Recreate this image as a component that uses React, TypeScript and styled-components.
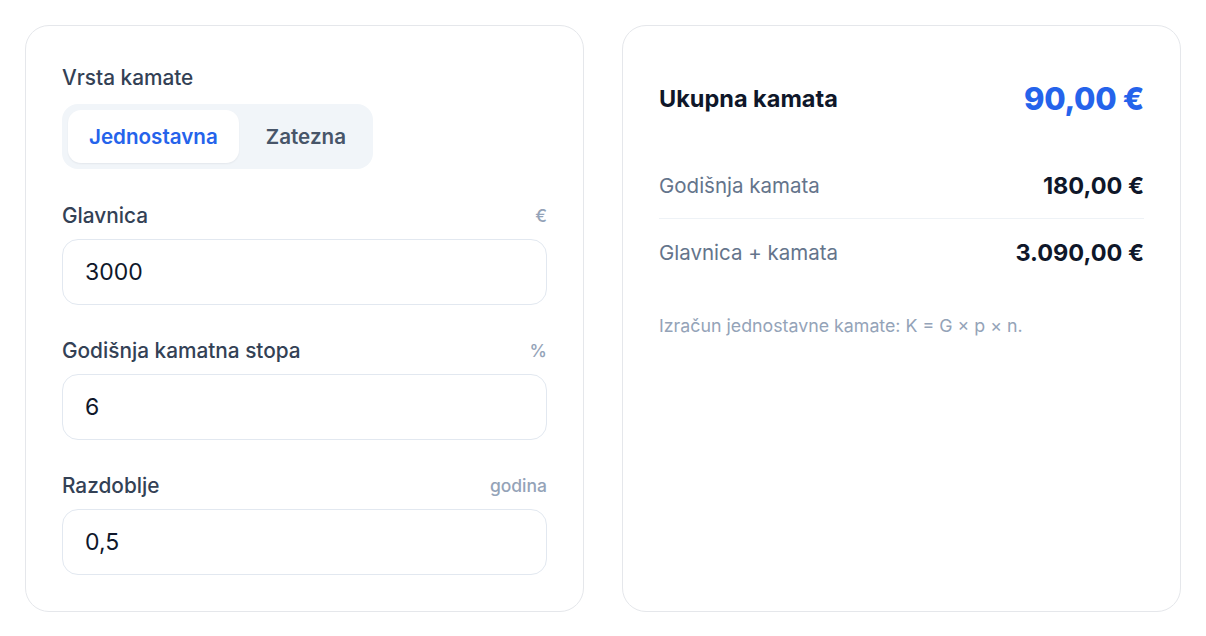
import { useState } from 'react';
import styled, { createGlobalStyle } from 'styled-components';

const GlobalStyle = createGlobalStyle`
  * { box-sizing: border-box; }
  body {
    margin: 0;
    background: #ffffff;
    font-family: Inter, "Noto Sans", sans-serif;
    -webkit-font-smoothing: antialiased;
  }
`;

const Page = styled.div`
  display: grid;
  grid-template-columns: 1fr 1fr;
  gap: 38px;
  padding: 25px;
  height: 636px;
`;

const Card = styled.section`
  background: #ffffff;
  border: 1px solid #e5e7eb;
  border-radius: 24px;
  height: 587px;
  padding: 36px 36px;
  display: flex;
  flex-direction: column;
`;

const SectionLabel = styled.div`
  font-size: 20.8px;
  font-weight: 500;
  color: #334155;
  line-height: 28px;
  margin-top: 2px;
`;

const Segmented = styled.div`
  display: inline-flex;
  align-self: flex-start;
  gap: 6px;
  padding: 6px;
  margin-top: 12px;
  background: #f1f5f9;
  border-radius: 16px;
`;

const SegButton = styled.button<{ $active: boolean }>`
  border: none;
  cursor: pointer;
  font-family: Inter, sans-serif;
  font-size: 20.6px;
  font-weight: 600;
  height: 53px;
  padding: 0 21px;
  border-radius: 13px;
  background: ${({ $active }) => ($active ? '#ffffff' : 'transparent')};
  color: ${({ $active }) => ($active ? '#2563eb' : '#475569')};
  box-shadow: ${({ $active }) => ($active ? '0 1px 2px rgba(15, 23, 42, 0.06)' : 'none')};
`;

const Fields = styled.div`
  display: flex;
  flex-direction: column;
  gap: 32px;
  margin-top: 33px;
`;

const Field = styled.div`
  display: flex;
  flex-direction: column;
  gap: 9px;
`;

const FieldHead = styled.div`
  display: flex;
  justify-content: space-between;
  align-items: center;
  line-height: 28px;
`;

const FieldLabel = styled.label`
  font-size: 20.8px;
  font-weight: 500;
  color: #334155;
`;

const Unit = styled.span`
  font-size: 17.5px;
  font-weight: 500;
  color: #94a3b8;
`;

const Input = styled.input`
  width: 100%;
  height: 66px;
  padding: 0 22px;
  border: 1px solid #e2e8f0;
  border-radius: 16px;
  background: #ffffff;
  font-family: Inter, sans-serif;
  font-size: 23px;
  color: #0f172a;
  outline: none;
`;

const TotalRow = styled.div`
  display: flex;
  justify-content: space-between;
  align-items: center;
  height: 73px;
`;

const TotalLabel = styled.div`
  font-size: 23.5px;
  font-weight: 700;
  color: #0f172a;
`;

const TotalValue = styled.div`
  font-size: 31px;
  font-weight: 800;
  color: #2563eb;
  letter-spacing: -0.3px;
`;

const Rows = styled.div`
  display: flex;
  flex-direction: column;
  margin-top: 17px;
`;

const Row = styled.div<{ $divider?: boolean }>`
  display: flex;
  justify-content: space-between;
  align-items: center;
  height: 67px;
  border-bottom: ${({ $divider }) => ($divider ? '1px solid #eef2f6' : 'none')};
`;

const RowLabel = styled.span`
  font-size: 20.5px;
  color: #64748b;
`;

const RowValue = styled.span`
  font-size: 23.5px;
  font-weight: 700;
  color: #0f172a;
`;

const Note = styled.p`
  margin: 29px 0 0;
  font-size: 17.8px;
  color: #94a3b8;
`;

const fields = [
  { id: 'glavnica', label: 'Glavnica', unit: '€', value: '3000' },
  { id: 'stopa', label: 'Godišnja kamatna stopa', unit: '%', value: '6' },
  { id: 'razdoblje', label: 'Razdoblje', unit: 'godina', value: '0,5' },
];

export default function App() {
  const [type, setType] = useState<'simple' | 'penalty'>('simple');
  const [values, setValues] = useState<Record<string, string>>(
    Object.fromEntries(fields.map((f) => [f.id, f.value]))
  );

  return (
    <>
      <GlobalStyle />
      <Page>
        <Card>
          <SectionLabel>Vrsta kamate</SectionLabel>
          <Segmented>
            <SegButton $active={type === 'simple'} onClick={() => setType('simple')}>Jednostavna</SegButton>
            <SegButton $active={type === 'penalty'} onClick={() => setType('penalty')}>Zatezna</SegButton>
          </Segmented>

          <Fields>
            {fields.map((f) => (
              <Field key={f.id}>
                <FieldHead>
                  <FieldLabel htmlFor={f.id}>{f.label}</FieldLabel>
                  <Unit>{f.unit}</Unit>
                </FieldHead>
                <Input
                  id={f.id}
                  value={values[f.id]}
                  onChange={(e) => setValues((v) => ({ ...v, [f.id]: e.target.value }))}
                />
              </Field>
            ))}
          </Fields>
        </Card>

        <Card>
          <TotalRow>
            <TotalLabel>Ukupna kamata</TotalLabel>
            <TotalValue>90,00 €</TotalValue>
          </TotalRow>
          <Rows>
            <Row $divider>
              <RowLabel>Godišnja kamata</RowLabel>
              <RowValue>180,00 €</RowValue>
            </Row>
            <Row>
              <RowLabel>Glavnica + kamata</RowLabel>
              <RowValue>3.090,00 €</RowValue>
            </Row>
          </Rows>
          <Note>Izračun jednostavne kamate: K = G × p × n.</Note>
        </Card>
      </Page>
    </>
  );
}
